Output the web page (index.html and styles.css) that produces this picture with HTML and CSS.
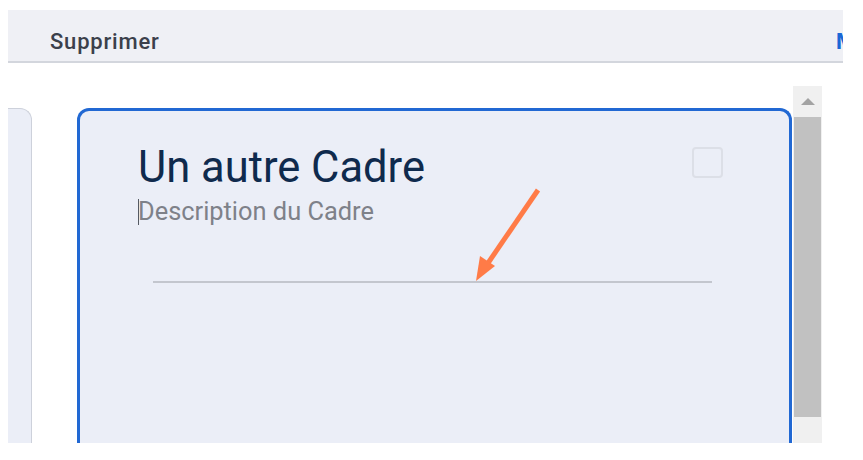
FILE: index.html
```html
<!DOCTYPE html>
<html lang="fr">
<head>
<meta charset="utf-8">
<link rel="stylesheet" href="styles.css">
</head>
<body>
<div class="page">
  <div class="toolbar">
    <span class="tool">Supprimer</span>
    <span class="tool-blue">M</span>
  </div>
  <div class="content">
    <div class="left-col">
      <div class="side-card"></div>
    </div>
    <div class="main-col">
      <div class="card">
        <div class="card-head">
          <div class="texts">
            <div class="title">Un autre Cadre</div>
            <div class="desc"><span class="caret"></span>Description du Cadre</div>
          </div>
          <div class="checkbox"></div>
        </div>
        <div class="rule"></div>
        <svg class="arrow" width="80" height="110" viewBox="0 0 80 110">
          <line x1="69" y1="6" x2="17" y2="82" stroke="#ff7b47" stroke-width="5"/>
          <polygon points="7,97 11,72 26,82" fill="#ff7b47"/>
        </svg>
      </div>
    </div>
    <div class="scrollbar">
      <div class="sb-btn"><span class="sb-tri"></span></div>
      <div class="sb-thumb"></div>
      <div class="sb-track"></div>
    </div>
  </div>
</div>
</body>
</html>
```
FILE: styles.css
```css
* { box-sizing: border-box; }
html, body { margin: 0; padding: 0; background: #ffffff; }
body {
  font-family: Roboto, "Liberation Sans", sans-serif;
  width: 863px;
  height: 460px;
  overflow: hidden;
}
.page {
  padding: 10px 0 0 8px;
}
.toolbar {
  width: 835px;
  height: 53px;
  background: #eff0f5;
  border-bottom: 2px solid #d3d6dd;
  display: flex;
  align-items: flex-end;
  padding: 0 0 6px 42px;
  position: relative;
}
.tool {
  font-size: 22px;
  line-height: 26px;
  font-weight: 500;
  color: #3b404b;
  letter-spacing: 0.8px;
}
.tool-blue {
  margin-left: auto;
  width: 7px;
  overflow: hidden;
  font-size: 22px;
  line-height: 26px;
  font-weight: 700;
  color: #1b67d6;
}
.content {
  display: flex;
  margin-top: 23px;
  height: 357px;
}
.left-col {
  width: 24px;
  padding-top: 22px;
}
.side-card {
  height: 100%;
  background: #ebeef7;
  border: 1px solid #cdd1db;
  border-left: none;
  border-bottom: none;
  border-top-right-radius: 12px;
}
.main-col {
  margin-left: 45px;
  width: 715px;
  padding-top: 22px;
}
.card {
  height: 100%;
  background: #ebeef7;
  border: 3px solid #2168d3;
  border-bottom: none;
  border-radius: 12px 12px 0 0;
  padding: 31px 66px 0 58px;
  position: relative;
}
.card-head {
  display: flex;
  justify-content: space-between;
}
.texts {
  display: flex;
  flex-direction: column;
}
.title {
  font-size: 43.5px;
  line-height: 52px;
  color: #0f2a4d;
}
.desc {
  font-size: 25.4px;
  line-height: 32px;
  margin-top: 1px;
  color: #7e8189;
  position: relative;
}
.caret {
  position: absolute;
  left: 0;
  top: 4px;
  width: 1px;
  height: 26px;
  background: #555a63;
}
.checkbox {
  width: 31px;
  height: 31px;
  border: 2px solid #dcdfe7;
  border-radius: 4px;
  margin-top: 5px;
}
.rule {
  margin: 54px 0 0 15px;
  width: 559px;
  height: 2px;
  background: #c3c6ce;
}
.arrow {
  position: absolute;
  left: 389px;
  top: 73px;
}
.scrollbar {
  margin-left: 1px;
  width: 29px;
  display: flex;
  flex-direction: column;
  background: #f0f0f0;
}
.sb-btn {
  height: 31px;
  display: flex;
  align-items: center;
  justify-content: center;
}
.sb-tri {
  width: 0;
  height: 0;
  border-left: 7px solid transparent;
  border-right: 7px solid transparent;
  border-bottom: 7px solid #a3a3a3;
}
.sb-thumb {
  height: 300px;
  margin: 0 1px;
  background: #c1c1c1;
}
.sb-track { flex: 1; }
```
